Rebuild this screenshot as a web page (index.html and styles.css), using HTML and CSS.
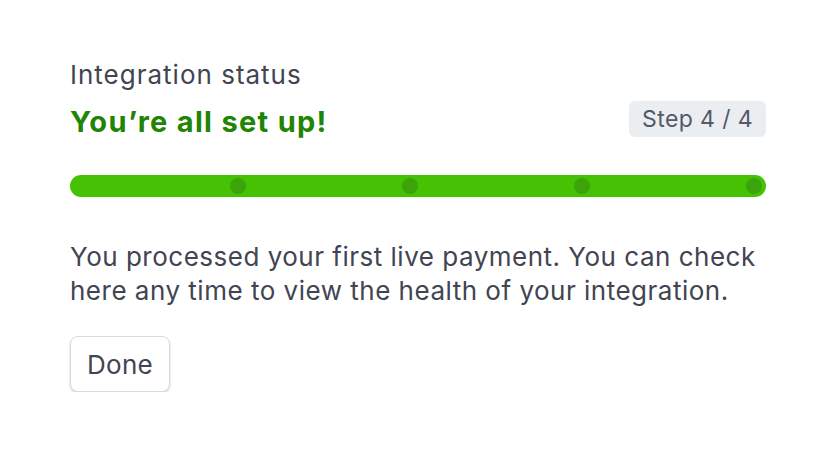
FILE: index.html
```html
<!DOCTYPE html>
<html lang="en">
<head>
<meta charset="utf-8">
<title>Integration status</title>
<link rel="stylesheet" href="styles.css">
</head>
<body>
<main class="card">
  <div class="label">Integration status</div>
  <div class="header-row">
    <h1 class="title">You’re all set up!</h1>
    <span class="badge">Step 4 / 4</span>
  </div>
  <div class="progress">
    <div class="seg"><span class="dot"></span></div>
    <div class="seg"><span class="dot"></span></div>
    <div class="seg"><span class="dot"></span></div>
    <div class="seg"><span class="dot"></span></div>
  </div>
  <p class="desc">You processed your first live payment. You can check here any time to view the health of your integration.</p>
  <button class="btn" type="button">Done</button>
</main>
</body>
</html>
```
FILE: styles.css
```css
html, body {
  margin: 0;
  padding: 0;
  background: #ffffff;
}
body {
  font-family: Inter, "Noto Sans", "Liberation Sans", sans-serif;
  color: #414552;
}
.card {
  width: 696px;
  padding: 60px 0 0 70px;
  display: flex;
  flex-direction: column;
  align-items: flex-start;
}
.label {
  font-size: 26px;
  line-height: 30px;
  letter-spacing: 1px;
  color: #414552;
}
.header-row {
  width: 100%;
  display: flex;
  justify-content: space-between;
  align-items: flex-start;
  margin-top: 11px;
}
.title {
  margin: 0;
  padding-top: 3px;
  font-size: 29px;
  line-height: 36px;
  font-weight: 700;
  letter-spacing: 1.3px;
  color: #228403;
}
.badge {
  background: #ebeef1;
  border-radius: 6px;
  padding: 0 13px;
  height: 36px;
  line-height: 36px;
  font-size: 23px;
  letter-spacing: 0.4px;
  color: #545969;
}
.progress {
  width: 100%;
  box-sizing: border-box;
  margin-top: 35px;
  height: 22px;
  padding: 0 4px;
  background: #45c204;
  border-radius: 11px;
  display: flex;
  align-items: center;
}
.seg {
  flex: 1;
  display: flex;
  justify-content: flex-end;
}
.dot {
  width: 16px;
  height: 16px;
  border-radius: 50%;
  background: #3ba40b;
}
.desc {
  margin: 43px 0 0;
  font-size: 26px;
  line-height: 34px;
  letter-spacing: 0.5px;
  color: #414552;
}
.btn {
  margin-top: 28px;
  font-family: inherit;
  font-size: 26px;
  letter-spacing: 0.3px;
  color: #414552;
  background: #ffffff;
  border: 1px solid #d5dbe1;
  border-radius: 8px;
  height: 56px;
  padding: 0 16px;
  box-shadow: 0 2px 3px rgba(0, 0, 0, 0.14);
}
```
